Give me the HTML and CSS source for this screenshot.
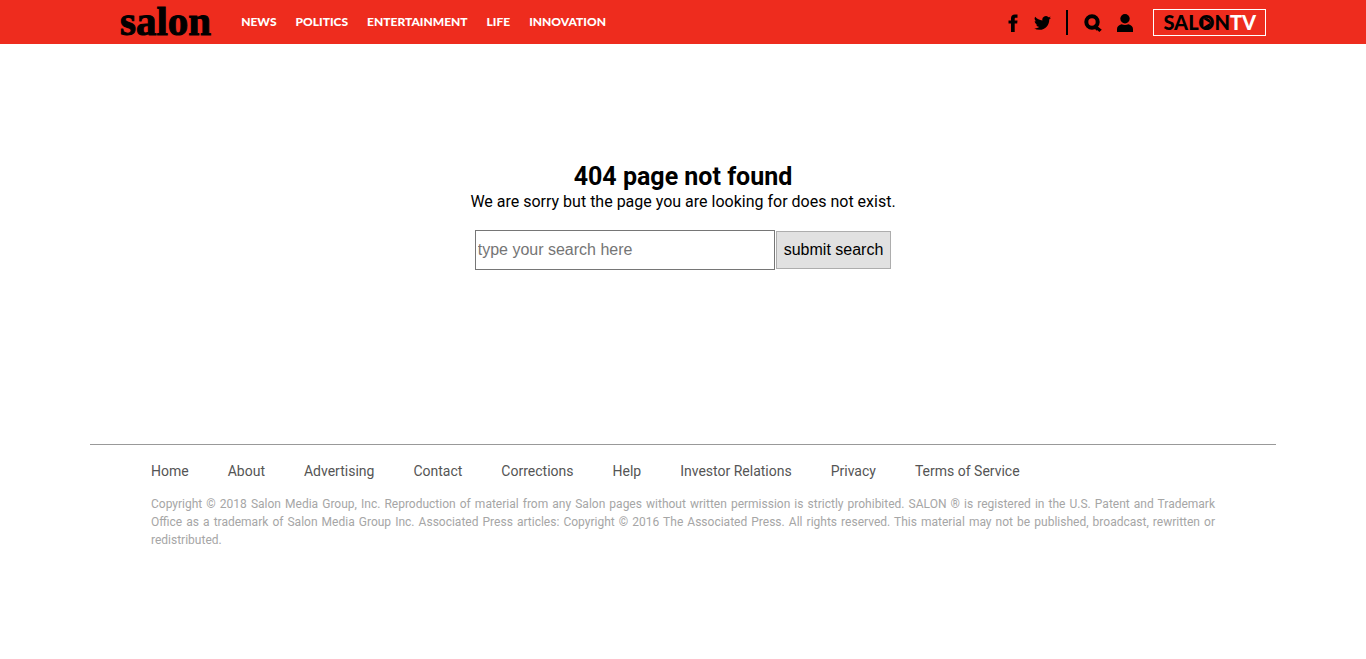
FILE: index.html
```html
<!DOCTYPE html>
<html lang="en">
<head>
<meta charset="utf-8">
<meta name="viewport" content="width=device-width, initial-scale=1">
<title>Salon</title>
<link rel="stylesheet" href="styles.css">
</head>
<body>
<header class="site-header">
  <div class="header-inner">
    <a class="logo" href="#">salon</a>
    <nav class="main-nav" aria-label="Sections">
      <a href="#">NEWS</a>
      <a href="#">POLITICS</a>
      <a href="#">ENTERTAINMENT</a>
      <a href="#">LIFE</a>
      <a href="#">INNOVATION</a>
    </nav>
    <div class="tools">
      <a class="tool" href="#" aria-label="Facebook"><svg width="11" height="18" viewBox="0 0 11 18"><path d="M3 18V9.600H.5V6.500H3V4.600C3 1.800 4.400.500 7 .500H9.500V3.700H8C7 3.700 6.700 4.100 6.700 5V6.500H9.500L9.200 9.600H6.700V18Z"/></svg></a>
      <a class="tool" href="#" aria-label="Twitter"><svg width="17" height="18" viewBox="0 0 24 24"><path d="M24 4.600a10 10 0 0 1-2.800.8 5 5 0 0 0 2.200-2.700c-1 .6-2 1-3.100 1.200a4.900 4.900 0 0 0-8.400 4.500C7.800 8.200 4.200 6.200 1.700 3.200a4.900 4.900 0 0 0 1.500 6.500c-.8 0-1.600-.2-2.200-.6v.1a4.900 4.900 0 0 0 4 4.800c-.7.200-1.500.2-2.200.1a4.900 4.900 0 0 0 4.600 3.400A9.900 9.900 0 0 1 0 19.500a13.900 13.900 0 0 0 7.500 2.200c9.100 0 14.300-7.700 14-14.600 1-.7 1.800-1.600 2.500-2.500z"/></svg></a>
      <span class="divider"></span>
      <button class="tool" type="button" aria-label="Search"><svg width="18" height="18" viewBox="0 0 18 18"><circle cx="8" cy="8" r="5.700" fill="none" stroke="#000" stroke-width="4"/><path d="M9.200 12.300 11 10.200 17.800 15.800 15.300 18 13.500 16.200 12.200 16.600Z"/></svg></button>
      <button class="tool account" type="button" aria-label="Account"><svg width="16" height="18" viewBox="0 0 16 18"><circle cx="8" cy="4.700" r="4.700"/><path d="M0 18V15C0 12.500 2 11 4.500 10.300 7 11.300 9 11.300 11.500 10.300 14 11 16 12.500 16 15V18Z"/></svg></button>
      <a class="tv" href="#">SAL<span class="tv-o">O<svg viewBox="0 0 10 10"><circle cx="5" cy="5" r="5"/><path fill="#ee2c1e" d="M2.500 1 9 5 2.500 9Z"/></svg></span>N<span class="tv-white">TV</span></a>
    </div>
  </div>
</header>
<main class="content">
  <h1>404 page not found</h1>
  <p>We are sorry but the page you are looking for does not exist.</p>
  <form class="search-form">
    <input type="text" aria-label="Search" placeholder="type your search here">
    <button type="submit">submit search</button>
  </form>
</main>
<footer class="site-footer">
  <nav class="footer-nav" aria-label="Footer">
    <a href="#">Home</a>
    <a href="#">About</a>
    <a href="#">Advertising</a>
    <a href="#">Contact</a>
    <a href="#">Corrections</a>
    <a href="#">Help</a>
    <a href="#">Investor Relations</a>
    <a href="#">Privacy</a>
    <a href="#">Terms of Service</a>
  </nav>
  <p class="legal">Copyright © 2018 Salon Media Group, Inc. Reproduction of material from any Salon pages without written permission is strictly prohibited. SALON ® is registered in the U.S. Patent and Trademark Office as a trademark of Salon Media Group Inc. Associated Press articles: Copyright © 2016 The Associated Press. All rights reserved. This material may not be published, broadcast, rewritten or redistributed.</p>
</footer>
</body>
</html>
```
FILE: styles.css
```css
* { box-sizing: border-box; }
body { margin: 0; background: #fff; color: #000; font-family: Roboto, sans-serif; }
a { color: inherit; text-decoration: none; }
h1, p { margin: 0; }
svg { display: block; }

.site-header { background: #ee2c1e; }
.header-inner {
  display: flex;
  align-items: center;
  height: 44px;
  max-width: 1186px;
  margin: 0 auto;
  padding: 0 10px 0 30px;
}
.logo {
  font: bold 41px/42px "Liberation Serif", serif;
  -webkit-text-stroke: 1px #000;
  margin-right: 30px;
  padding-bottom: 2px;
}
.main-nav {
  display: flex;
  gap: 19px;
  color: #fff;
  font: 900 12px/18px Lato, sans-serif;
}
.tools { display: flex; align-items: center; margin-left: auto; }
.tool { display: block; padding: 2px 0 0; border: 0; background: none; margin-right: 15px; }
.account { margin-right: 20px; }
.divider { width: 2px; height: 25px; background: #000; margin-right: 16px; }
.tv {
  border: 1px solid #fff;
  padding: 0 9px;
  font: 900 20px/25px Lato, sans-serif;
}
.tv-o { position: relative; }
.tv-o svg { position: absolute; left: 3px; top: 8px; width: 10px; height: 10px; }
.tv-white { color: #fff; }

.content { padding: 118px 20px 0; text-align: center; }
h1 { font-size: 25px; line-height: 30px; }
.content p { font-size: 16px; line-height: 20px; }
.search-form {
  display: flex;
  justify-content: center;
  align-items: center;
  gap: 1px;
  margin-top: 18px;
}
.search-form input {
  width: 300px;
  height: 40px;
  padding: 1px 2px;
  border: 1px solid #767676;
  font: 16px "Liberation Sans", sans-serif;
}
.search-form input::placeholder { color: #757575; }
.search-form button {
  height: 38px;
  padding: 1px 7px;
  border: 1px solid #adadad;
  background: #e1e1e1;
  color: #000;
  font: 16px "Liberation Sans", sans-serif;
}

.site-footer {
  max-width: 1186px;
  margin: 174px auto 0;
  padding: 16px 61px;
  border-top: 1px solid #999;
}
.footer-nav {
  display: flex;
  flex-wrap: wrap;
  gap: 0 39px;
  color: #555;
  font-size: 14px;
  line-height: 20px;
}
.legal {
  margin-top: 14px;
  color: #a6a6a6;
  font-size: 12px;
  line-height: 18px;
  text-align: justify;
}
```
